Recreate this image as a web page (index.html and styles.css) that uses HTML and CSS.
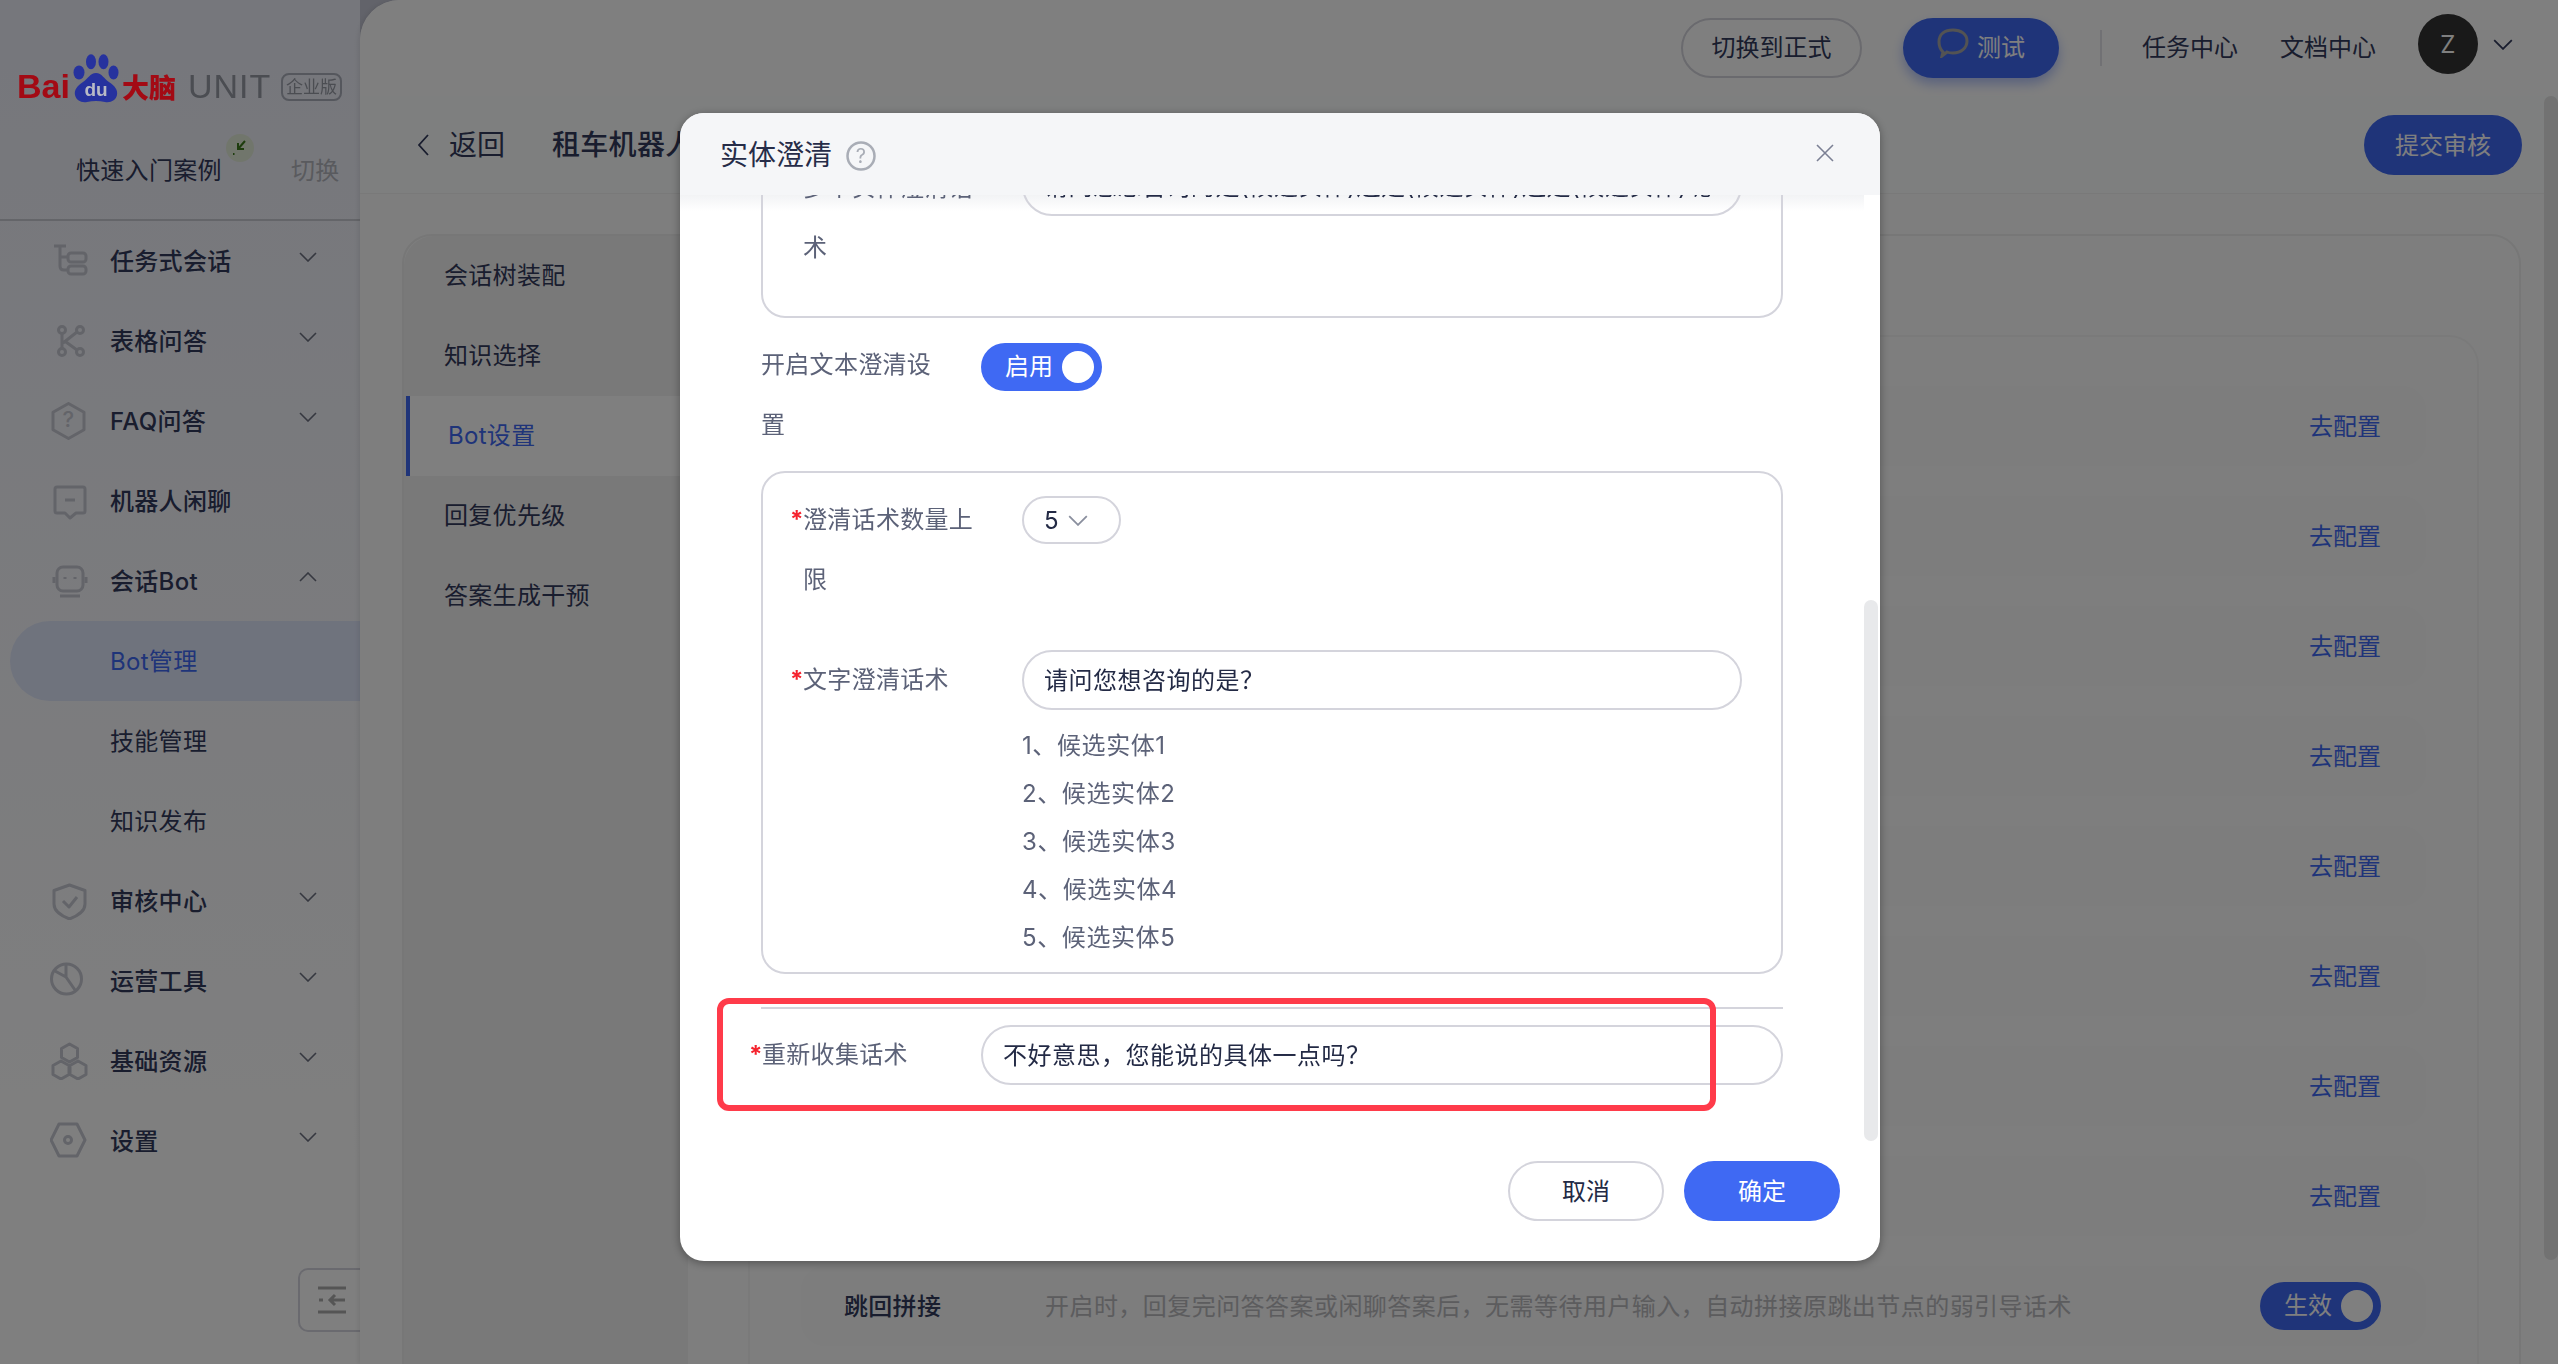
FILE: index.html
```html
<!DOCTYPE html>
<html lang="zh">
  <head>
    <meta charset="UTF-8" />
    <title>实体澄清</title>
    <link rel="stylesheet" href="styles.css">
  </head>
  <body>
    <svg class="defs" width="0" height="0">
      <symbol id="chev-down" viewBox="0 0 18 10"><path d="M1 1l8 8 8-8" fill="none" stroke="currentColor" stroke-width="1.6"/></symbol>
      <symbol id="chev-up" viewBox="0 0 18 10"><path d="M1 9l8-8 8 8" fill="none" stroke="currentColor" stroke-width="1.6"/></symbol>
    </svg>

    <aside class="sidebar">
      <div class="logo">
        <span class="logo-bai">Bai</span>
        <svg class="logo-paw" width="46" height="49" viewBox="0 0 46 49">
          <ellipse cx="6" cy="18.5" rx="5.5" ry="7" fill="#26329e"/>
          <ellipse cx="18" cy="7.7" rx="5" ry="7.5" fill="#26329e"/>
          <ellipse cx="30.5" cy="7.7" rx="5" ry="7.5" fill="#26329e"/>
          <ellipse cx="40.5" cy="18.5" rx="5" ry="7" fill="#26329e"/>
          <path d="M23 19c6 0 8 6 13 9 6 4 9 8 8 13-1 5-6 8-12 7-3-.5-6-1-9-1s-6 .5-9 1c-6 1-11-2-12-7-1-5 2-9 8-13 5-3 7-9 13-9z" fill="#26329e"/>
          <text x="23" y="42" class="logo-du">du</text>
        </svg>
        <span class="logo-brain">大脑</span>
        <span class="logo-unit">UNIT</span>
        <span class="logo-tag">企业版</span>
      </div>
      <div class="case">
        <span class="case-name">快速入门案例
          <span class="case-badge">
            <svg width="20" height="20" viewBox="0 0 20 20"><path d="M15 3L8 11M8 5v6h6M3 16h1.5" fill="none" stroke="#3d7a1c" stroke-width="2"/></svg>
          </span>
        </span>
        <span class="case-switch">切换</span>
      </div>
      <nav class="nav">
        <div class="nav-item">
          <svg class="nav-icon" viewBox="0 0 40 38"><path d="M4 4h12M10 4v20c0 3 2 4 4 4h4M10 15h8"/><rect x="18" y="11" width="18" height="9" rx="3"/><rect x="18" y="24" width="18" height="8" rx="3"/></svg>
          <span>任务式会话</span><svg class="nav-chev"><use href="#chev-down"/></svg>
        </div>
        <div class="nav-item">
          <svg class="nav-icon" viewBox="0 0 40 38"><circle cx="12" cy="8" r="3.5"/><circle cx="30" cy="8" r="3.5"/><circle cx="12" cy="30" r="3.5"/><circle cx="30" cy="30" r="3.5"/><path d="M12 12v14M27 10L13 21M16 20l11 8"/></svg>
          <span>表格问答</span><svg class="nav-chev"><use href="#chev-down"/></svg>
        </div>
        <div class="nav-item">
          <svg class="nav-icon" viewBox="0 0 40 38"><path d="M18.5 1.5l15.5 8.7v17.6l-15.5 8.7L3 27.800V10.200z"/><text x="18.5" y="25" class="nav-icon-text">?</text></svg>
          <span>FAQ问答</span><svg class="nav-chev"><use href="#chev-down"/></svg>
        </div>
        <div class="nav-item">
          <svg class="nav-icon" viewBox="0 0 40 38"><path d="M7 5h26a2 2 0 012 2v22a2 2 0 01-2 2H26l-6 5-5-5H7a2 2 0 01-2-2V7a2 2 0 012-2zM15 18h10"/></svg>
          <span>机器人闲聊</span>
        </div>
        <div class="nav-item">
          <svg class="nav-icon" viewBox="0 0 40 38"><rect x="7" y="5" width="26" height="24" rx="6"/><path d="M4 15v6M36 15v6M10 34h20M15 15v2M25 15v2"/></svg>
          <span>会话Bot</span><svg class="nav-chev"><use href="#chev-up"/></svg>
        </div>
        <div class="nav-sub active"><span>Bot管理</span></div>
        <div class="nav-sub"><span>技能管理</span></div>
        <div class="nav-sub"><span>知识发布</span></div>
        <div class="nav-item">
          <svg class="nav-icon" viewBox="0 0 40 38"><path d="M19.500 3L35 8.500V22c0 8-8 12-15.500 15C12 34 4 30 4 22V8.500zM13 19l6 6 8-10"/></svg>
          <span>审核中心</span><svg class="nav-chev"><use href="#chev-down"/></svg>
        </div>
        <div class="nav-item">
          <svg class="nav-icon" viewBox="0 0 40 38"><circle cx="16.500" cy="17" r="15"/><path d="M5 9l11 6V2M16 15l9 13"/></svg>
          <span>运营工具</span><svg class="nav-chev"><use href="#chev-down"/></svg>
        </div>
        <div class="nav-item">
          <svg class="nav-icon" viewBox="0 0 40 38"><path d="M19.500 2l8 4.500v9l-8 4.500-8-4.500v-9zM11 19l8 4.500v9L11 37l-8-4.500v-9zM28 19l8 4.500v9L28 37l-8-4.500v-9z"/></svg>
          <span>基础资源</span><svg class="nav-chev"><use href="#chev-down"/></svg>
        </div>
        <div class="nav-item">
          <svg class="nav-icon" viewBox="0 0 40 38"><path d="M9 2h18l8 16-8 16H9L1 18z"/><circle cx="18" cy="18" r="3.500"/></svg>
          <span>设置</span><svg class="nav-chev"><use href="#chev-down"/></svg>
        </div>
      </nav>
      <div class="collapse">
        <svg width="28" height="28" viewBox="0 0 28 28"><path d="M0 2h28M0 26h28M1 14h4M12 14h15M17 9l-5 5 5 5" fill="none" stroke="#aaa" stroke-width="3"/></svg>
      </div>
    </aside>

    <main class="main">
      <header class="topbar">
        <button class="btn btn-line">切换到正式</button>
        <button class="btn btn-test">
          <svg class="test-icon" width="32" height="30" viewBox="0 0 32 30"><path d="M6 24C2 20 2 16 2 14 2 6 8 2 16 2s14 4 14 11-6 12-14 12c-2 0-4 0-6-1l-5 4z" fill="none" stroke="#a6a6a6" stroke-width="3"/></svg>
          测试
        </button>
        <span class="topbar-line"></span>
        <a class="topbar-link">任务中心</a>
        <a class="topbar-link">文档中心</a>
        <span class="avatar">Z</span>
        <svg class="topbar-chev"><use href="#chev-down"/></svg>
      </header>
      <div class="pagehead">
        <svg class="back-icon" width="12" height="24" viewBox="0 0 12 24"><path d="M11 2L2 12l9 10" fill="none" stroke="#333a5c" stroke-width="1.800"/></svg>
        <span class="back-text">返回</span>
        <span class="bot-name">租车机器人</span>
        <button class="btn btn-submit">提交审核</button>
      </div>
      <div class="content">
        <div class="card">
          <ul class="menu">
            <li>会话树装配</li>
            <li>知识选择</li>
            <li class="active">Bot设置</li>
            <li>回复优先级</li>
            <li>答案生成干预</li>
          </ul>
          <div class="panel">
            <div class="row"><a class="row-link">去配置</a></div>
            <div class="row"><a class="row-link">去配置</a></div>
            <div class="row"><a class="row-link">去配置</a></div>
            <div class="row"><a class="row-link">去配置</a></div>
            <div class="row"><a class="row-link">去配置</a></div>
            <div class="row"><a class="row-link">去配置</a></div>
            <div class="row"><a class="row-link">去配置</a></div>
            <div class="row"><a class="row-link">去配置</a></div>
            <div class="row">
              <span class="row-name">跳回拼接</span>
              <span class="row-desc">开启时，回复完问答答案或闲聊答案后，无需等待用户输入，自动拼接原跳出节点的弱引导话术</span>
              <span class="switch">生效<i class="switch-knob"></i></span>
            </div>
          </div>
        </div>
      </div>
      <div class="page-scroll"></div>
    </main>

    <div class="mask">
      <section class="modal">
        <div class="modal-head">
          <span class="modal-title">实体澄清</span>
          <svg class="modal-help" width="30" height="30" viewBox="0 0 30 30"><circle cx="15" cy="15" r="13.500" fill="none" stroke="#a9adb6" stroke-width="2.500"/><text x="15" y="22" class="modal-help-text">?</text></svg>
          <svg class="modal-close" width="20" height="20" viewBox="0 0 20 20"><path d="M2 2l16 16M18 2L2 18" fill="none" stroke="#7b8094" stroke-width="1.600"/></svg>
        </div>
        <div class="modal-body">
          <div class="modal-fade"></div>
          <div class="box box-first">
            <div class="field">
              <label class="field-label">多个实体澄清话术</label>
              <input class="text-input" value="请问您想咨询的是(候选实体)还是(候选实体)还是(候选实体)呢" />
            </div>
          </div>
          <div class="line-row">
            <label class="line-label">开启文本澄清设置</label>
            <span class="switch switch-on">启用<i class="switch-knob"></i></span>
          </div>
          <div class="box box-second">
            <div class="field">
              <label class="field-label req">澄清话术数量上限</label>
              <span class="select">5<svg class="select-chev"><use href="#chev-down"/></svg></span>
            </div>
            <div class="field field-gap">
              <label class="field-label req">文字澄清话术</label>
              <div class="field-main">
                <input class="text-input" value="请问您想咨询的是？" />
                <ol class="cands">
                  <li>1、候选实体1</li>
                  <li>2、候选实体2</li>
                  <li>3、候选实体3</li>
                  <li>4、候选实体4</li>
                  <li>5、候选实体5</li>
                </ol>
              </div>
            </div>
          </div>
          <div class="line-row line-row-rule">
            <label class="line-label req">重新收集话术</label>
            <input class="text-input text-input-wide" value="不好意思，您能说的具体一点吗？" />
          </div>
        </div>
        <div class="modal-foot">
          <button class="btn btn-cancel">取消</button>
          <button class="btn btn-ok">确定</button>
        </div>
        <div class="modal-scroll"></div>
        <div class="callout"></div>
      </section>
    </div>
  </body>
</html>
```

FILE: styles.css
```css
* {
  box-sizing: border-box;
}

html,
body {
  margin: 0;
  height: 1364px;
  overflow: hidden;
}

body {
  display: flex;
  font-family: "Inter", "Noto Sans CJK SC", sans-serif;
  font-size: 24px;
  letter-spacing: 0.3px;
  color: #333a5c;
  background: #c4c6d4;
}

.defs {
  position: absolute;
}

/* sidebar */
.sidebar {
  width: 360px;
  flex-shrink: 0;
  background: linear-gradient(#eceef8, #fff 85%);
}

.logo {
  display: flex;
  align-items: center;
  height: 49px;
  margin-top: 54px;
  padding-left: 17px;
  position: relative;
  z-index: 20;
  letter-spacing: 0;
}

.logo-bai {
  font-family: "Liberation Sans", sans-serif;
  font-weight: 700;
  font-size: 34px;
  color: #a30a14;
  padding-top: 16px;
  width: 56px;
}

.logo-du {
  font-family: "Liberation Sans", sans-serif;
  font-weight: 700;
  font-size: 19px;
  fill: #b9bbc6;
  text-anchor: middle;
}

.logo-brain {
  font-family: "Noto Sans CJK SC", sans-serif;
  font-weight: 900;
  font-size: 27px;
  color: #a30a14;
  margin-left: 3px;
  padding-top: 16px;
  line-height: 32px;
  width: 66px;
  white-space: nowrap;
}

.logo-unit {
  font-family: "Liberation Sans", sans-serif;
  font-size: 34px;
  letter-spacing: 1px;
  color: #4b4d52;
  padding-top: 16px;
  width: 93px;
}

.logo-tag {
  width: 61px;
  height: 28px;
  margin-top: 16px;
  border: 2px solid #55575d;
  border-radius: 8px;
  font-size: 17px;
  line-height: 24px;
  text-align: center;
  color: #4b4d52;
  white-space: nowrap;
}

.case {
  display: flex;
  align-items: center;
  height: 118px;
  padding: 15px 0 0 76px;
  border-bottom: 2px solid #c8cad2;
}

.case-name {
  position: relative;
  width: 215px;
  font-size: 24px;
}

.case-badge {
  position: absolute;
  left: 150px;
  top: -17px;
  width: 28px;
  height: 28px;
  border-radius: 50%;
  background: #e3ecd8;
  display: flex;
  align-items: center;
  justify-content: center;
}

.case-switch {
  color: #b3b5bc;
}

.nav-item,
.nav-sub {
  display: flex;
  align-items: center;
  height: 80px;
}

.nav-item span,
.nav-sub span {
  padding-bottom: 3px;
}

.nav-item {
  padding-left: 50px;
  font-weight: 500;
}

.nav-icon {
  width: 40px;
  height: 38px;
  margin-right: 20px;
  flex-shrink: 0;
  fill: none;
  stroke: #c6c8d2;
  stroke-width: 3;
  stroke-linejoin: round;
}

.nav-icon-text {
  font-size: 22px;
  stroke: none;
  fill: #c6c8d2;
  text-anchor: middle;
}

.nav-chev {
  width: 18px;
  height: 10px;
  margin-left: auto;
  margin-right: 43px;
  transform: translateY(-4px);
  color: #6c7080;
}

.nav-sub {
  margin-left: 10px;
  padding-left: 100px;
  border-radius: 40px 0 0 40px;
}

.nav-sub.active {
  background: #dfe6fb;
  color: #3f69f3;
}

.collapse {
  position: absolute;
  left: 298px;
  top: 1268px;
  width: 62px;
  height: 64px;
  display: flex;
  align-items: center;
  padding-left: 18px;
  border: 2px solid #d4d4de;
  border-right: 0;
  border-radius: 10px 0 0 10px;
}

/* main */
.main {
  flex: 1;
  min-width: 0;
  position: relative;
  background: #fcfdfd;
  border-radius: 40px 0 0 0;
  box-shadow: -2px 0 4px rgba(0, 0, 0, 0.08);
  overflow: hidden;
}

.btn {
  height: 60px;
  padding: 0 0 3px;
  border: 0;
  border-radius: 30px;
  font-family: inherit;
  font-size: 24px;
  display: inline-flex;
  align-items: center;
  justify-content: center;
}

.topbar {
  display: flex;
  align-items: center;
  justify-content: flex-end;
  height: 96px;
  padding-right: 44px;
  background: #fff;
}

.topbar .btn {
  padding-bottom: 5px;
}

.btn-line {
  width: 181px;
  margin-right: 41px;
  background: transparent;
  border: 2px solid #d4d4dc;
  color: #333a5c;
}

.btn-test {
  width: 156px;
  gap: 8px;
  background: #3f69f3;
  color: #fff;
  box-shadow: 0 6px 12px rgba(63, 105, 243, 0.4);
}

.test-icon {
  margin-top: -6px;
}

.topbar-line {
  width: 2px;
  height: 36px;
  margin: 0 40px 0 41px;
  background: #e2e2e8;
}

.topbar-link {
  margin-right: 42px;
  padding-bottom: 5px;
  letter-spacing: 0;
}

.avatar {
  width: 60px;
  height: 60px;
  margin-top: -8px;
  border-radius: 50%;
  background: #333;
  color: #fff;
  display: flex;
  align-items: center;
  justify-content: center;
}

.topbar-chev {
  width: 22px;
  height: 11px;
  margin: -8px 0 0 14px;
  color: #333a5c;
}

.pagehead {
  display: flex;
  align-items: center;
  height: 98px;
  padding: 0 36px 0 57px;
  background: #fcffff;
  border-bottom: 1px solid #f2f2f2;
}

.back-text {
  font-size: 28px;
  margin-left: 20px;
  padding-bottom: 3px;
  letter-spacing: 0;
}

.bot-name {
  font-size: 28px;
  font-weight: 500;
  margin-left: 47px;
  padding-bottom: 4px;
}

.btn-submit {
  width: 158px;
  margin-left: auto;
  background: #3f69f3;
  color: #fff;
}

.content {
  padding: 40px 37px 0 42px;
}

.card {
  display: flex;
  height: 1200px;
  border: 2px solid #eeeeee;
  border-radius: 30px;
}

.menu {
  width: 284px;
  flex-shrink: 0;
  margin: 0;
  padding: 0;
  list-style: none;
  background: #f2f2f2;
  border-radius: 30px 0 0 0;
}

.menu li {
  height: 80px;
  padding-left: 40px;
  line-height: 79px;
}

.menu li.active {
  background: #fff;
  color: #3f69f3;
  border-left: 4px solid #3f69f3;
  padding-left: 38px;
  margin-left: 2px;
}

.panel {
  flex: 1;
  display: flex;
  flex-direction: column;
  gap: 30px;
  margin: 99px 40px 0 60px;
  padding: 49px 51px 0;
  border: 2px solid #f5f5f5;
  border-radius: 30px 30px 0 0;
}

.row {
  display: flex;
  align-items: center;
  justify-content: flex-end;
  flex-shrink: 0;
  height: 80px;
  padding: 0 45px 0 43px;
  background: #fafafa;
  border-radius: 24px;
}

.row-link {
  color: #3f69f3;
  padding-bottom: 3px;
  letter-spacing: 0;
}

.row-name {
  width: 201px;
  font-weight: 500;
  padding-bottom: 3px;
}

.row-desc {
  flex: 1;
  color: #b8b8bc;
  letter-spacing: 0.45px;
  padding-bottom: 3px;
}

.switch {
  position: relative;
  width: 121px;
  height: 48px;
  padding-left: 24px;
  border-radius: 24px;
  background: #3f69f3;
  color: #fff;
  line-height: 47px;
  letter-spacing: 0;
}

.switch-knob {
  position: absolute;
  right: 8px;
  top: 8px;
  width: 32px;
  height: 32px;
  border-radius: 50%;
  background: #fff;
}

.page-scroll {
  position: absolute;
  right: 0;
  top: 96px;
  width: 14px;
  height: 1164px;
  background: #e4e4e4;
  border-radius: 7px;
}

/* modal */
.mask {
  position: fixed;
  inset: 0;
  z-index: 10;
  display: flex;
  justify-content: center;
  padding: 113px 0 0 2px;
  background: rgba(0, 0, 0, 0.5);
}

.modal {
  position: relative;
  display: flex;
  flex-direction: column;
  width: 1200px;
  height: 1148px;
  background: #fff;
  border-radius: 24px;
  box-shadow: 0 2px 10px rgba(0, 0, 0, 0.35);
  overflow: hidden;
}

.modal-head {
  position: relative;
  z-index: 2;
  display: flex;
  align-items: center;
  flex-shrink: 0;
  height: 82px;
  padding: 0 45px 0 40px;
  background: #f5f6f8;
}

.modal-title {
  font-size: 28px;
  color: #262c48;
  padding-bottom: 3px;
  letter-spacing: 0;
}

.modal-help {
  margin: 4px 0 0 14px;
}

.modal-help-text {
  font-size: 20px;
  fill: #a9adb6;
  text-anchor: middle;
}

.modal-close {
  margin-left: auto;
  margin-top: -2px;
}

.modal-body {
  position: relative;
  flex: 1;
  min-height: 0;
  padding: 0 97px 0 81px;
  overflow: hidden;
}

.modal-fade {
  position: absolute;
  left: 0;
  top: 0;
  width: 1184px;
  height: 16px;
  background: linear-gradient(#f2f3f5, rgba(245, 246, 248, 0));
}

.box {
  position: relative;
  border: 2px solid #d4d4dc;
  border-radius: 24px;
  padding: 0 28px;
}

.box-first {
  margin-top: -56px;
  padding-top: 15px;
  padding-bottom: 38px;
}

.box-first .field-label {
  padding-top: 2px;
}

.box-first .text-input {
  background: transparent;
}

.box-second {
  margin-top: 16px;
  padding-top: 17px;
  padding-bottom: 10px;
}

.field {
  display: flex;
  align-items: flex-start;
}

.field-gap {
  margin-top: 40px;
}

.field-label,
.line-label {
  flex-shrink: 0;
  line-height: 60px;
  color: #5c6278;
}

.field-label {
  width: 231px;
  padding: 0 47px 0 12px;
}

.line-label {
  width: 220px;
  padding-right: 30px;
}

.req::before {
  content: "*";
  display: inline-block;
  width: 13px;
  margin-left: -13px;
  color: #f5222d;
  font-weight: 700;
}

.text-input {
  display: block;
  width: 720px;
  height: 60px;
  padding: 0 20px 3px;
  border: 2px solid #d4d4dc;
  border-radius: 30px;
  font-family: inherit;
  font-size: 24px;
  letter-spacing: 0.5px;
  color: #232a45;
  background: #fff;
  outline: none;
}

.text-input-wide {
  width: 802px;
}

.field-main {
  flex: 1;
}

.select {
  display: flex;
  align-items: center;
  width: 99px;
  height: 48px;
  margin-top: 6px;
  padding-left: 20px;
  border: 2px solid #d4d4dc;
  border-radius: 24px;
  color: #232a45;
}

.select-chev {
  width: 20px;
  height: 11px;
  margin-left: 9px;
  color: #8a8f9e;
}

.cands {
  margin: 12px 0 0;
  padding: 0;
  list-style: none;
  line-height: 48px;
  letter-spacing: 0.6px;
  color: #5c6278;
}

.line-row {
  display: flex;
  align-items: flex-start;
  margin-top: 17px;
}

.line-row .switch {
  margin-top: 8px;
}

.line-row-rule {
  margin-top: 33px;
  padding-top: 16px;
  border-top: 2px solid #d4d4dc;
  align-items: center;
}

.line-row-rule .line-label {
  padding-left: 1px;
}

.modal-foot {
  display: flex;
  justify-content: flex-end;
  gap: 20px;
  flex-shrink: 0;
  height: 120px;
  padding: 20px 40px 40px;
}

.btn-cancel,
.btn-ok {
  width: 156px;
}

.btn-cancel {
  background: #fff;
  border: 2px solid #d4d4dc;
  color: #232a45;
}

.btn-ok {
  background: #3f69f3;
  color: #fff;
}

.modal-scroll {
  position: absolute;
  right: 2px;
  top: 487px;
  width: 14px;
  height: 541px;
  background: #e8e9eb;
  border-radius: 7px;
}

.callout {
  position: absolute;
  left: 37px;
  top: 885px;
  width: 999px;
  height: 113px;
  border: 6px solid #ff3b4a;
  border-radius: 12px;
}
```
